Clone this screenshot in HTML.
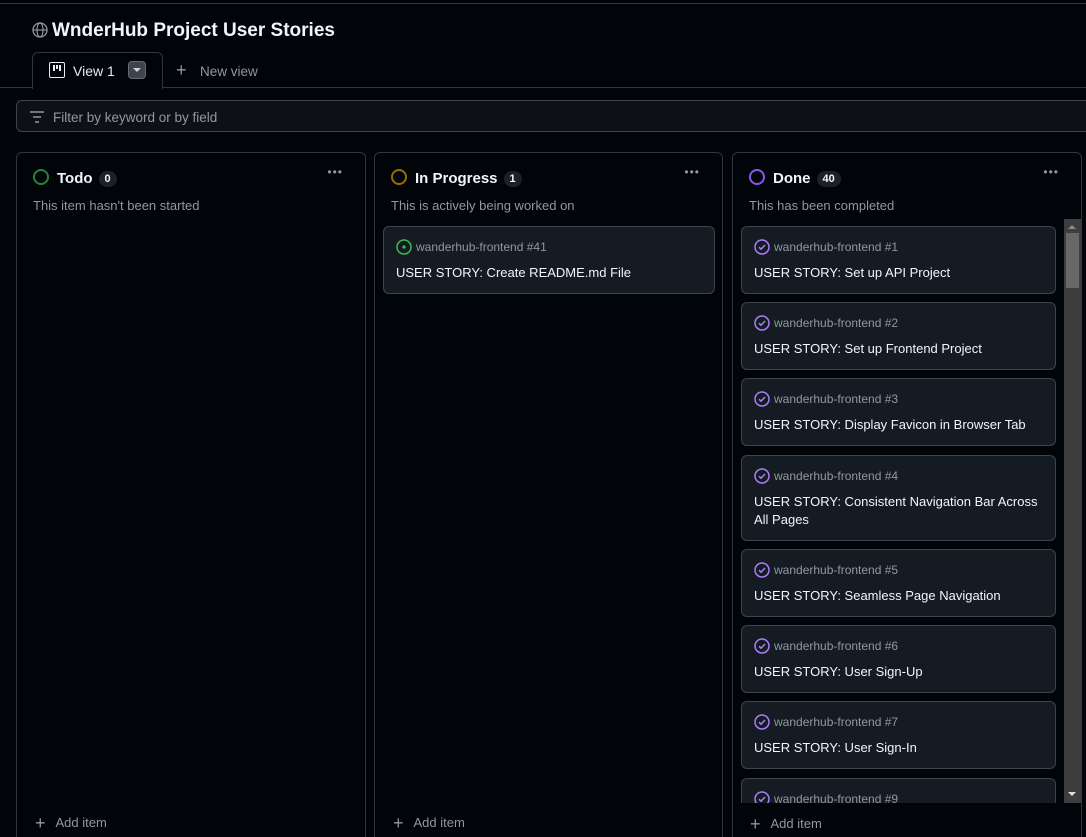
<!DOCTYPE html>
<html><head><meta charset="utf-8"><style>
*{box-sizing:border-box;margin:0;padding:0}
html,body{width:1086px;height:837px;overflow:hidden}
body{background:#010409;font-family:"Liberation Sans",sans-serif;color:#e6edf3;position:relative}
.a{position:absolute}
.col{position:absolute;top:152px;height:720px;border:1px solid #30363d;border-radius:6px;background:#010409}
.ct{position:absolute;left:40px;top:17px;font-size:15px;font-weight:bold;color:#f0f6fc}
.cnt{display:inline-block;background:#1c2128;border-radius:10px;font-size:11px;padding:2px 6px;margin-left:6px;vertical-align:1px}
.desc{position:absolute;left:16px;top:45px;font-size:13px;color:#9198a1}
.dots{position:absolute;right:22px;top:12px;color:#9198a1;font-size:12px;letter-spacing:1px}
.ring{position:absolute;left:16px;top:16px;width:16px;height:16px;border-radius:50%;border:2px solid}
.add{position:absolute;left:18px;font-size:13px;color:#9198a1}
.add b{font-weight:normal;font-size:18px;margin-right:10px;vertical-align:-2px}
.card{position:absolute;left:741px;width:315px;background:#151b23;border:1px solid #3d444d;border-radius:6px}
.card .r{position:absolute;left:12px;top:13px;font-size:12px;color:#9198a1;padding-left:20px}
.card .r svg{position:absolute;left:0;top:-1px}
.card .t{position:absolute;left:12px;top:37px;font-size:13px;color:#f0f6fc;line-height:18px;width:300px}
</style></head><body>
<div class="a" style="left:0;top:3px;width:1086px;height:1px;background:#30363d"></div>
<svg class="a" style="left:32px;top:22px" width="16" height="16" viewBox="0 0 16 16"><circle cx="8" cy="8" r="7" fill="none" stroke="#9198a1" stroke-width="1.3"/><ellipse cx="8" cy="8" rx="3" ry="7" fill="none" stroke="#9198a1" stroke-width="1.2"/><line x1="1" y1="8" x2="15" y2="8" stroke="#9198a1" stroke-width="1.2"/></svg>
<div class="a" style="left:52px;top:20px;font-size:19px;font-weight:bold;color:#f0f6fc">WnderHub Project User Stories</div>
<div class="a" style="left:0;top:87px;width:1086px;height:1px;background:#30363d"></div>
<div class="a" style="left:32px;top:52px;width:131px;height:37px;border:1px solid #30363d;border-bottom:none;border-radius:6px 6px 0 0;background:#010409"></div>
<div class="a" style="left:49px;top:62px;width:16px;height:16px;border:1.5px solid #e6edf3;border-radius:2px"></div>
<div class="a" style="left:53px;top:65px;width:2px;height:6px;background:#e6edf3"></div><div class="a" style="left:56px;top:65px;width:2px;height:4px;background:#e6edf3"></div><div class="a" style="left:59px;top:65px;width:2px;height:6px;background:#e6edf3"></div>
<div class="a" style="left:73px;top:63px;font-size:14px">View 1</div>
<div class="a" style="left:128px;top:61px;width:18px;height:18px;border-radius:4px;background:#3d444d;border:1px solid #656c76"></div>
<div class="a" style="left:133px;top:68px;border:4px solid transparent;border-top:4px solid #c9d1d9;border-bottom:none"></div>
<div class="a" style="left:176px;top:60px;font-size:18px;color:#9198a1">+</div>
<div class="a" style="left:200px;top:64px;font-size:13.5px;color:#9198a1">New view</div>
<div class="a" style="left:16px;top:100px;width:1080px;height:32px;border:1px solid #3d444d;border-radius:6px;background:#0d1117"></div>
<svg class="a" style="left:29px;top:110px" width="16" height="14"><line x1="1" y1="2" x2="15" y2="2" stroke="#9198a1" stroke-width="1.5"/><line x1="4" y1="7" x2="12" y2="7" stroke="#9198a1" stroke-width="1.5"/><line x1="6" y1="12" x2="10" y2="12" stroke="#9198a1" stroke-width="1.5"/></svg>
<div class="a" style="left:53px;top:110px;font-size:13.5px;color:#9198a1">Filter by keyword or by field</div>

<div class="col" style="left:16px;width:350px"><div class="ring" style="border-color:#238636"></div><div class="ct">Todo<span class="cnt">0</span></div><div class="dots">•••</div><div class="desc">This item hasn't been started</div><div class="add" style="top:660px"><b>+</b>Add item</div></div>
<div class="col" style="left:374px;width:349px"><div class="ring" style="border-color:#9e6a03"></div><div class="ct">In Progress<span class="cnt">1</span></div><div class="dots">•••</div><div class="desc">This is actively being worked on</div><div class="add" style="top:660px"><b>+</b>Add item</div></div>
<div class="col" style="left:732px;width:350px"><div class="ring" style="border-color:#8957e5"></div><div class="ct">Done<span class="cnt">40</span></div><div class="dots">•••</div><div class="desc">This has been completed</div></div>

<div class="card" style="left:383px;top:226px;width:332px;height:68px"><div class="r">wanderhub-frontend #41<svg width="16" height="16"><circle cx="8" cy="8" r="7" fill="none" stroke="#3fb950" stroke-width="1.5"/><circle cx="8" cy="8" r="1.6" fill="#3fb950"/></svg></div><div class="t">USER STORY: Create README.md File</div></div>

<svg width="0" height="0" style="position:absolute"><defs><g id="ck"><circle cx="8" cy="8" r="7" fill="none" stroke="#ab7df8" stroke-width="1.5"/><path d="M5 8.2l2 2 4-4.2" fill="none" stroke="#ab7df8" stroke-width="1.5"/></g></defs></svg>
<div class="card" style="top:226px;height:68px"><div class="r">wanderhub-frontend #1<svg width="16" height="16"><use href="#ck"/></svg></div><div class="t">USER STORY: Set up API Project</div></div>
<div class="card" style="top:302px;height:68px"><div class="r">wanderhub-frontend #2<svg width="16" height="16"><use href="#ck"/></svg></div><div class="t">USER STORY: Set up Frontend Project</div></div>
<div class="card" style="top:378px;height:68px"><div class="r">wanderhub-frontend #3<svg width="16" height="16"><use href="#ck"/></svg></div><div class="t">USER STORY: Display Favicon in Browser Tab</div></div>
<div class="card" style="top:455px;height:86px"><div class="r">wanderhub-frontend #4<svg width="16" height="16"><use href="#ck"/></svg></div><div class="t">USER STORY: Consistent Navigation Bar Across All Pages</div></div>
<div class="card" style="top:549px;height:68px"><div class="r">wanderhub-frontend #5<svg width="16" height="16"><use href="#ck"/></svg></div><div class="t">USER STORY: Seamless Page Navigation</div></div>
<div class="card" style="top:625px;height:68px"><div class="r">wanderhub-frontend #6<svg width="16" height="16"><use href="#ck"/></svg></div><div class="t">USER STORY: User Sign-Up</div></div>
<div class="card" style="top:701px;height:68px"><div class="r">wanderhub-frontend #7<svg width="16" height="16"><use href="#ck"/></svg></div><div class="t">USER STORY: User Sign-In</div></div>
<div class="card" style="top:778px;height:68px"><div class="r">wanderhub-frontend #9<svg width="16" height="16"><use href="#ck"/></svg></div></div>
<div class="a" style="left:733px;top:803px;width:348px;height:60px;background:#010409"></div>
<div class="a" style="left:750px;top:814px;font-size:13px;color:#9198a1"><span style="font-size:18px;margin-right:10px;vertical-align:-2px">+</span>Add item</div>
<div class="a" style="left:1064px;top:219px;width:17px;height:584px;background:#3e3e3e"></div>
<div class="a" style="left:1066px;top:233px;width:13px;height:55px;background:#686868"></div>
<div class="a" style="left:1068px;top:225px;border:4px solid transparent;border-bottom:4px solid #8a8a8a;border-top:none"></div>
<div class="a" style="left:1068px;top:792px;border:4px solid transparent;border-top:4px solid #e0e0e0;border-bottom:none"></div>
</body></html>
